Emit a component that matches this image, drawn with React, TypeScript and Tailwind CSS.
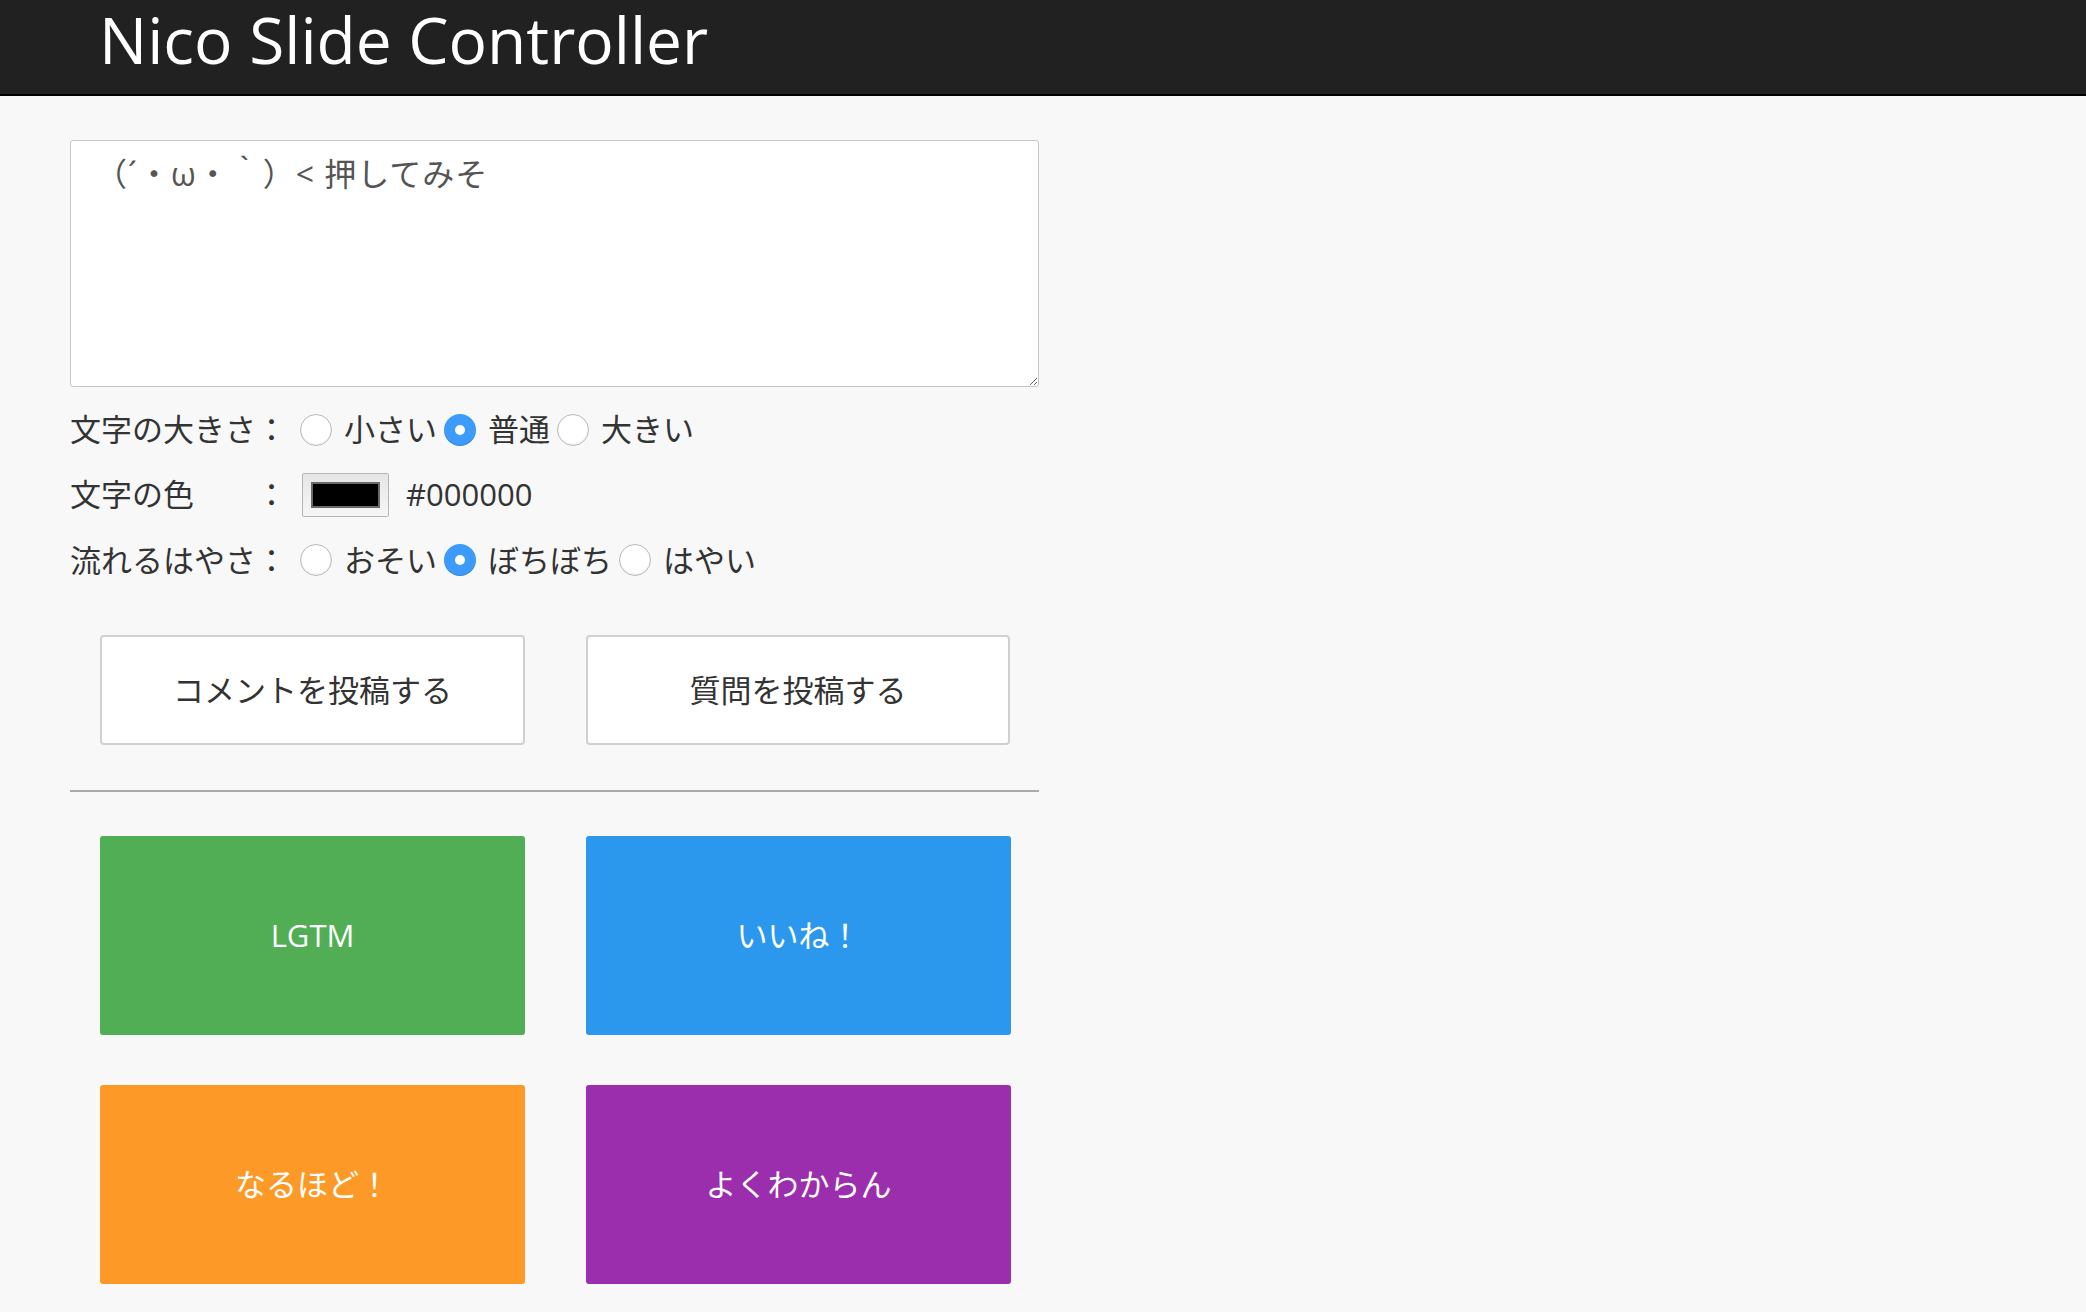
import React from 'react';

const font = 'font-["Open_Sans","Noto_Sans_CJK_JP",sans-serif]';

type RadioProps = { checked?: boolean; first?: boolean; label: string };

const Radio: React.FC<RadioProps> = ({ checked, first, label }) => {
  return (
    <label className="flex items-center">
      <span
        className={`${first ? 'ml-[13px]' : 'ml-[7px]'} flex h-[32px] w-[32px] items-center justify-center rounded-full ${
          checked
            ? 'bg-[#3d9bfc] shadow-[inset_0_-1px_1px_rgba(0,0,0,0.12)]'
            : 'border border-[#b9b9b9] bg-white shadow-[inset_0_-1px_2px_rgba(0,0,0,0.08)]'
        }`}
      >
        {checked && <span className="h-[10px] w-[10px] rounded-full bg-white" />}
      </span>
      <span className="ml-[12px]">{label}</span>
    </label>
  );
};

type ReactionProps = { label: string; color: string };

const Reaction: React.FC<ReactionProps> = ({ label, color }) => (
  <button className={`h-[199px] w-[425px] rounded-[3px] text-[31px] text-white ${color}`}>{label}</button>
);

export default function App() {
  return (
    <div className={`min-h-[1312px] bg-[#f8f8f8] ${font}`}>
      <header className="h-[96px] border-b-2 border-black bg-[#212121] pl-[99px]">
        <h1 className='font-["Open_Sans",sans-serif] text-[64px] leading-[80px] text-white'>Nico Slide Controller</h1>
      </header>

      <main className="ml-[70px] w-[969px] pt-[44px] text-[31px] text-[#333]">
        <textarea
          className="block h-[247px] w-full rounded-[3px] border border-[#c6c6c6] bg-white pl-[24px] pt-[9px] text-[32px] leading-[1.5] tracking-[1px] text-[#555] outline-none"
          defaultValue="（´・ω・｀）< 押してみそ"
        />

        <div className="mt-[10px]">
          <div className="flex h-[65px] items-center">
            <span>文字の大きさ：</span>
            <Radio first label="小さい" />
            <Radio checked label="普通" />
            <Radio label="大きい" />
          </div>
          <div className="flex h-[65px] items-center">
            <span>文字の色　　：</span>
            <span className="ml-[15px] flex h-[44px] w-[87px] items-center justify-center rounded-[2px] border border-[#b5b5b5] bg-gradient-to-b from-[#e6e6e6] to-[#f6f6f6]">
              <span className="h-[26px] w-[69px] border-2 border-[#6a6a6a] bg-black" />
            </span>
            <span className="ml-[17px]">#000000</span>
          </div>
          <div className="flex h-[66px] items-center">
            <span>流れるはやさ：</span>
            <Radio first label="おそい" />
            <Radio checked label="ぼちぼち" />
            <Radio label="はやい" />
          </div>
        </div>

        <div className="mt-[42px] flex gap-[61px] pl-[30px]">
          <button className="h-[110px] w-[425px] rounded-[4px] border-2 border-[#d0d0d0] bg-white text-[31px] text-[#333]">
            コメントを投稿する
          </button>
          <button className="h-[110px] w-[424px] rounded-[4px] border-2 border-[#d0d0d0] bg-white text-[31px] text-[#333]">
            質問を投稿する
          </button>
        </div>

        <hr className="mt-[45px] border-t-2 border-[#aaaaaa]" />

        <div className="mt-[44px] grid grid-cols-[425px_424px] gap-x-[61px] gap-y-[50px] pl-[30px]">
          <Reaction label="LGTM" color="bg-[#51ae55]" />
          <Reaction label="いいね！" color="bg-[#2b98ee]" />
          <Reaction label="なるほど！" color="bg-[#fd9a27]" />
          <Reaction label="よくわからん" color="bg-[#9b2ead]" />
        </div>
      </main>
    </div>
  );
}
